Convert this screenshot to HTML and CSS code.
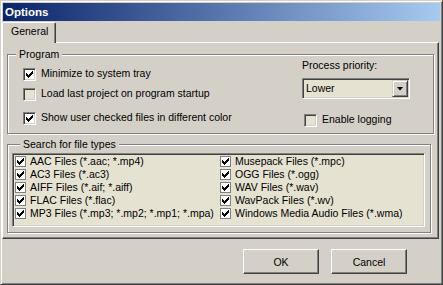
FILE: index.html
```html
<!DOCTYPE html>
<html lang="en">
<head>
    <meta charset="UTF-8">
    <title>Options</title>
    <link rel="stylesheet" href="styles.css">
</head>
<body>
    <div class="window">
        <div class="titlebar">Options</div>

        <div class="tabs">
            <div class="tab">General</div>
        </div>

        <div class="panel">
            <fieldset class="group program">
                <legend>Program</legend>
                <div class="program-body">
                    <div class="col-left">
                        <label class="check row-1"><span class="box on"></span><span class="text">Minimize to system tray</span></label>
                        <label class="check row-2"><span class="box"></span><span class="text">Load last project on program startup</span></label>
                        <label class="check row-3"><span class="box on"></span><span class="text">Show user checked files in different color</span></label>
                    </div>
                    <div class="col-right">
                        <div class="prio-label">Process priority:</div>
                        <div class="combo">
                            <span class="combo-value">Lower</span>
                            <span class="combo-btn"></span>
                        </div>
                        <label class="check logging"><span class="box"></span><span class="text">Enable logging</span></label>
                    </div>
                </div>
            </fieldset>

            <fieldset class="group search">
                <legend>Search for file types</legend>
                <div class="listbox">
                    <div class="item"><span class="mini on"></span>AAC Files (*.aac; *.mp4)</div>
                    <div class="item"><span class="mini on"></span>AC3 Files (*.ac3)</div>
                    <div class="item"><span class="mini on"></span>AIFF Files (*.aif; *.aiff)</div>
                    <div class="item"><span class="mini on"></span>FLAC Files (*.flac)</div>
                    <div class="item"><span class="mini on"></span>MP3 Files (*.mp3; *.mp2; *.mp1; *.mpa)</div>
                    <div class="item"><span class="mini on"></span>Musepack Files (*.mpc)</div>
                    <div class="item"><span class="mini on"></span>OGG Files (*.ogg)</div>
                    <div class="item"><span class="mini on"></span>WAV Files (*.wav)</div>
                    <div class="item"><span class="mini on"></span>WavPack Files (*.wv)</div>
                    <div class="item"><span class="mini on"></span>Windows Media Audio Files (*.wma)</div>
                </div>
            </fieldset>
        </div>

        <div class="buttons">
            <button class="button">OK</button>
            <button class="button">Cancel</button>
        </div>
    </div>
</body>
</html>
```

FILE: styles.css
```css
* {
    margin: 0;
    padding: 0;
    box-sizing: border-box;
}

body {
    font-family: "Liberation Sans", Arial, sans-serif;
    font-size: 10.5px;
    color: #000;
    background: #d4d0c8;
}

.window {
    width: 443px;
    height: 285px;
    padding: 1px;
    background: #d4d0c8;
    border: 1px solid;
    border-color: #d4d0c8 #404040 #404040 #d4d0c8;
    box-shadow: inset 1px 1px #fff, inset -1px -1px #808080;
}

.titlebar {
    height: 18px;
    margin: 1px 1px 0 1px;
    padding-left: 2px;
    background: linear-gradient(90deg, #0a246a 0%, #a6caf0 100%);
    color: #fff;
    font-weight: bold;
    font-size: 11.5px;
    line-height: 18px;
}

/* tabs */
.tabs {
    display: flex;
    height: 20px;
    margin-top: 1px;
}

.tab {
    position: relative;
    z-index: 1;
    width: 54px;
    height: 21px;
    padding: 2px 0 0 8px;
    line-height: 13px;
    background: #d4d0c8;
    border-top: 1px solid #fff;
    border-left: 1px solid #fff;
    border-right: 1px solid #404040;
    box-shadow: inset -1px 0 #808080;
    border-radius: 2px 2px 0 0;
}

.panel {
    height: 197px;
    margin-right: 2px;
    border: 1px solid;
    border-color: #fff #404040 #404040 #fff;
    box-shadow: inset -1px -1px #808080;
}

/* group boxes */
.group {
    margin-left: 4px;
    padding: 0;
    min-width: 0;
    border: 1px solid #808080;
    box-shadow: 1px 1px 0 #fff, inset 1px 1px 0 #fff;
}

.group legend {
    margin-left: 8px;
    padding: 0 3px;
    height: 12px;
    line-height: 12px;
    background: #d4d0c8;
}

.program {
    width: 427px;
    margin-top: 5px;
    padding-bottom: 6px;
}

.program-body {
    display: grid;
    grid-template-columns: 279px 108px;
    padding-left: 15px;
}

.check {
    display: flex;
    align-items: flex-start;
    gap: 5px;
    height: 13px;
}

.check .text {
    line-height: 11px;
    white-space: nowrap;
}

.row-1 { margin-top: 8px; }
.row-2 { margin-top: 7px; }
.row-3 { margin-top: 11px; }

.box {
    display: flex;
    align-items: center;
    justify-content: center;
    flex: none;
    width: 13px;
    height: 13px;
    background: #e6e2d2;
    border: 1px solid;
    border-color: #808080 #fff #fff #808080;
    box-shadow: inset 1px 1px #404040, inset -1px -1px #d4d0c8;
}

.box.on {
    background: #fff;
}

.on::after {
    content: "";
    width: 7px;
    height: 7px;
    background: #000;
    clip-path: polygon(6px 0, 7px 0, 7px 3px, 6px 3px, 6px 4px, 5px 4px, 5px 5px, 4px 5px, 4px 6px, 3px 6px, 3px 7px, 2px 7px, 2px 6px, 1px 6px, 1px 5px, 0 5px, 0 2px, 1px 2px, 1px 3px, 2px 3px, 2px 4px, 3px 4px, 3px 3px, 4px 3px, 4px 2px, 5px 2px, 5px 1px, 6px 1px);
}

.prio-label {
    margin-top: -1px;
    line-height: 12px;
}

.combo {
    display: flex;
    height: 21px;
    margin-top: 7px;
    padding: 1px;
    background: #e6e2d2;
    border: 1px solid;
    border-color: #808080 #fff #fff #808080;
    box-shadow: inset 1px 1px #404040, inset -1px -1px #d4d0c8;
}

.combo-value {
    flex: 1;
    padding-left: 2px;
    line-height: 17px;
}

.combo-btn {
    display: flex;
    align-items: center;
    justify-content: center;
    width: 16px;
    height: 17px;
    background: #d4d0c8;
    border: 1px solid;
    border-color: #d4d0c8 #404040 #404040 #d4d0c8;
    box-shadow: inset 1px 1px #fff, inset -1px -1px #808080;
}

.combo-btn::after {
    content: "";
    width: 7px;
    height: 4px;
    background: #000;
    clip-path: polygon(0 0, 7px 0, 3.5px 4px);
}

.logging {
    margin-top: 15px;
    margin-left: 2px;
}

/* file type list */
.search {
    width: 424px;
    margin-top: 4px;
    padding: 0 5px 5px 4px;
}

.listbox {
    display: grid;
    grid-template-columns: 205px 205px;
    grid-template-rows: repeat(5, 13px);
    grid-auto-flow: column;
    width: 413px;
    height: 74px;
    margin-top: 3px;
    padding: 1px 0 0 2px;
    background: #e6e2d2;
    border: 1px solid;
    border-color: #808080 #fff #fff #808080;
    box-shadow: inset 1px 1px #404040, inset -1px -1px #d4d0c8;
}

.item {
    display: flex;
    align-items: center;
    gap: 4px;
    line-height: 13px;
    white-space: nowrap;
}

.mini {
    display: flex;
    align-items: center;
    justify-content: center;
    flex: none;
    width: 11px;
    height: 11px;
    background: #fff;
    border: 1px solid #808080;
}

/* dialog buttons */
.buttons {
    display: flex;
    justify-content: flex-end;
    gap: 12px;
    margin-top: 10px;
    padding-right: 34px;
}

.button {
    width: 76px;
    height: 25px;
    font-family: inherit;
    font-size: 10.5px;
    color: #000;
    background: #d4d0c8;
    border: 1px solid;
    border-color: #fff #404040 #404040 #fff;
    box-shadow: inset -1px -1px #808080;
}
```
